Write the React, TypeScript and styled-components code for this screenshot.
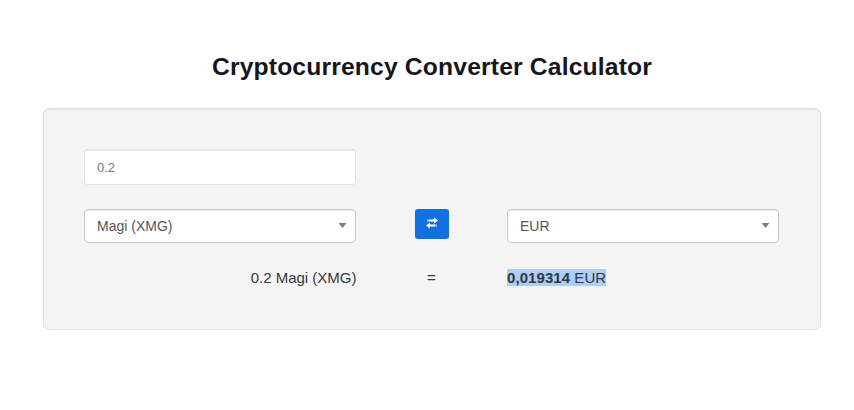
import React from "react";
import styled, { createGlobalStyle } from "styled-components";

const GlobalStyle = createGlobalStyle`
  *, *::before, *::after { box-sizing: border-box; }
  body {
    margin: 0;
    background: #fff;
    color: #333;
    font-family: "Liberation Sans", Arial, sans-serif;
  }
`;

const Page = styled.main`
  padding: 49px 33px 0 43px;
  height: 410px;
  overflow: hidden;
`;

const Title = styled.h1`
  margin: 0 0 23px;
  font-size: 24.7px;
  line-height: 36px;
  letter-spacing: 0.15px;
  font-weight: 700;
  text-align: center;
  color: #16171c;
`;

const Well = styled.section`
  height: 222px;
  padding: 40px;
  background: #f4f4f4;
  border: 1px solid #e0e0e0;
  border-radius: 6px;
  box-shadow: inset 0 1px 1px rgba(0, 0, 0, 0.05);
`;

const Grid = styled.div`
  display: grid;
  grid-template-columns: 272px 151px 272px;
  grid-template-rows: 36px 34px 20px;
  row-gap: 24px;
`;

const AmountInput = styled.input`
  grid-column: 1 / 2;
  width: 100%;
  height: 36px;
  padding: 0 12px;
  font: 13px/18px "Liberation Sans", Arial, sans-serif;
  color: #777;
  background: #fff;
  border: 1px solid #e1e3e8;
  border-radius: 4px;
  box-shadow: inset 0 1px 1px rgba(0, 0, 0, 0.075);
  outline: none;
`;

const Select = styled.div<{ $column: number }>`
  grid-column: ${(p) => p.$column};
  grid-row: 2;
  display: flex;
  align-items: center;
  justify-content: space-between;
  padding: 0 8.5px 0 12px;
  font-size: 14px;
  line-height: 20px;
  color: #555;
  background: #fff;
  border: 1px solid #c8c8c8;
  border-radius: 4px;
  box-shadow: inset 0 1px 1px rgba(0, 0, 0, 0.075);
`;

const Caret = styled.span`
  width: 8px;
  height: 5px;
  margin-bottom: 1px;
  background: #808080;
  clip-path: polygon(0 0, 100% 0, 50% 100%);
`;

const SwapButton = styled.button`
  grid-column: 2;
  grid-row: 2;
  justify-self: center;
  display: flex;
  align-items: center;
  justify-content: center;
  width: 34px;
  height: 30px;
  padding: 0 0 2px;
  color: #fff;
  background: #1170e0;
  border: 0;
  border-radius: 3px;
`;

const Result = styled.div<{ $align: "left" | "center" | "right" }>`
  grid-row: 3;
  font-size: 15px;
  line-height: 22px;
  text-align: ${(p) => p.$align};
  margin-right: ${(p) => (p.$align === "right" ? "-0.5px" : "0")};
  color: #383838;
`;

const Highlight = styled.span`
  background: #accef7;
  color: #33373f;
  letter-spacing: 0.07px;
`;

export default function App() {
  return (
    <>
      <GlobalStyle />
      <Page>
        <Title>Cryptocurrency Converter Calculator</Title>
        <Well>
          <Grid>
            <AmountInput defaultValue="0.2" aria-label="Amount" />
            <Select $column={1}>
              Magi (XMG)
              <Caret />
            </Select>
            <SwapButton aria-label="Swap currencies">
              <svg width="12" height="12" viewBox="0 0 12 12" fill="currentColor">
                <path d="M8 0.6 12 3.5 8 6.4V4.5H3V2.6H8Z" />
                <path d="M1 2.6H3V4.5H1Z" opacity=".6" />
                <path d="M4 5.6 0 8.5 4 11.4V9.4H9V7.5H4Z" />
                <path d="M9 7.5H11V9.4H9Z" opacity=".6" />
              </svg>
            </SwapButton>
            <Select $column={3}>
              EUR
              <Caret />
            </Select>
            <Result $align="right">0.2 Magi (XMG)</Result>
            <Result $align="center">=</Result>
            <Result $align="left">
              <Highlight>
                <b>0,019314</b> EUR
              </Highlight>
            </Result>
          </Grid>
        </Well>
      </Page>
    </>
  );
}
